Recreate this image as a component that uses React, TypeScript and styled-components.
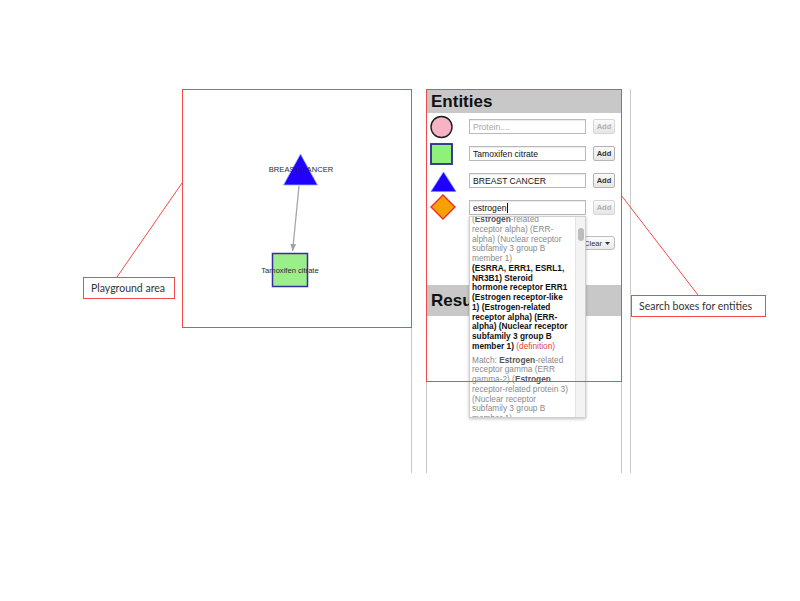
import React from "react";
import styled, { createGlobalStyle } from "styled-components";

const Global = createGlobalStyle`
  html, body { margin: 0; padding: 0; background: #fff; }
  body { font-family: "Liberation Sans", Arial, sans-serif; }
`;

const RED = "#f04a4a";
const LINE = "#c9c9c9";

const Stage = styled.div`
  position: relative;
  width: 800px;
  height: 601px;
  background: #fff;
  overflow: hidden;
`;

const Frame = styled.div`
  display: flex;
  height: 384px;
  padding: 89px 0 0 182px;
`;

const Canvas = styled.div`
  width: 229px;
  border-right: 1px solid ${LINE};
`;

const Sidebar = styled.div`
  margin-left: 14px;
  width: 194px;
  border-left: 1px solid ${LINE};
  border-right: 1px solid ${LINE};
  padding-top: 1px;
  display: flex;
  flex-direction: column;
`;

const EdgeLine = styled.div`
  margin-left: 8px;
  width: 0;
  border-left: 1px solid ${LINE};
`;

const SectionHeader = styled.div<{ $height: number; $gap?: number }>`
  height: ${(p) => p.$height}px;
  margin-top: ${(p) => p.$gap ?? 0}px;
  background: #c8c8c8;
  display: flex;
  align-items: center;
  padding-left: 4px;
  font-family: "Liberation Sans", Arial, sans-serif;
  font-weight: bold;
  font-size: 17px;
  color: #111;
`;

const EntityList = styled.div`
  display: flex;
  flex-direction: column;
`;

const Row = styled.div`
  height: 27px;
  display: flex;
  align-items: center;
  padding-left: 3px;
`;

const IconCell = styled.div`
  width: 28px;
  height: 27px;
  display: flex;
  align-items: center;
`;

const FieldWrap = styled.div`
  position: relative;
  margin-left: 11px;
  width: 117px;
  height: 15px;
`;

const Field = styled.div<{ $placeholder?: boolean }>`
  box-sizing: border-box;
  width: 100%;
  height: 100%;
  border: 1px solid #b9b9b9;
  box-shadow: inset 0 1px 1px rgba(0, 0, 0, 0.08);
  background: #fff;
  padding-left: 3px;
  display: flex;
  align-items: center;
  font-size: 8.6px;
  color: ${(p) => (p.$placeholder ? "#a8a8a8" : "#111")};
  white-space: nowrap;
`;

const Caret = styled.span`
  display: inline-block;
  width: 1px;
  height: 10px;
  background: #111;
  margin-left: 1px;
`;

const AddButton = styled.div<{ $disabled?: boolean }>`
  box-sizing: border-box;
  margin-left: 7px;
  width: 22px;
  height: 15px;
  border: 1px solid ${(p) => (p.$disabled ? "#d6d6d6" : "#b4b4b4")};
  border-radius: 2px;
  background: linear-gradient(#fafafa, #e6e6e6);
  display: flex;
  align-items: center;
  justify-content: center;
  font-size: 7.5px;
  font-weight: bold;
  color: ${(p) => (p.$disabled ? "#b0b0b0" : "#333")};
`;

const ClearRow = styled.div`
  margin-top: 15px;
  height: 14px;
  display: flex;
  justify-content: flex-end;
  padding-right: 6px;
`;

const ClearButton = styled.div`
  box-sizing: border-box;
  width: 46px;
  height: 14px;
  border: 1px solid #bdbdbd;
  border-radius: 3px;
  background: linear-gradient(#fcfcfc, #e8e8e8);
  display: flex;
  align-items: center;
  justify-content: flex-end;
  padding-right: 4px;
  gap: 3px;
  font-size: 7.5px;
  color: #333;
`;

const Menu = styled.div`
  position: absolute;
  top: 100%;
  left: 0;
  width: 117px;
  height: 202px;
  box-sizing: border-box;
  margin-top: 1px;
  background: #fff;
  border: 1px solid #cfcfcf;
  box-shadow: 0 1px 3px rgba(0, 0, 0, 0.25);
  overflow: hidden;
  z-index: 5;
  display: flex;
`;

const MenuBody = styled.div`
  flex: 1;
  padding: 0 0 0 2px;
  margin-top: -2px;
  overflow: hidden;
`;

const MenuItem = styled.div<{ $strong?: boolean; $gap?: number }>`
  margin-top: ${(p) => p.$gap ?? 0}px;
  font-size: 8.3px;
  line-height: 9.75px;
  color: ${(p) => (p.$strong ? "#111" : "#8a8a8a")};
  font-weight: ${(p) => (p.$strong ? "bold" : "normal")};
`;

const MenuLine = styled.div`
  white-space: nowrap;
`;

const Em = styled.span`
  font-weight: bold;
  color: #555;
`;

const Definition = styled.span`
  font-weight: normal;
  color: #d8483f;
`;

const ScrollTrack = styled.div`
  width: 9px;
  background: #f3f3f3;
  border-left: 1px solid #e4e4e4;
  padding-top: 11px;
  display: flex;
  justify-content: center;
`;

const ScrollThumb = styled.div`
  width: 6px;
  height: 13px;
  border-radius: 3px;
  background: #bdbdbd;
`;

const Highlight = styled.div`
  position: absolute;
  box-sizing: border-box;
  border: 1px solid ${RED};
  pointer-events: none;
  z-index: 10;
`;

const Callout = styled.div`
  position: absolute;
  box-sizing: border-box;
  border: 1px solid ${RED};
  background: #fff;
  display: flex;
  align-items: center;
  padding-left: 7px;
  font-family: Lato, "Open Sans", sans-serif;
  font-size: 10.5px;
  color: #333;
  z-index: 10;
`;

const Overlay = styled.svg`
  position: absolute;
  left: 0;
  top: 0;
  pointer-events: none;
  z-index: 9;
`;

type Seg = string | { b: string } | { def: string };

const renderLine = (segs: Seg[]) =>
  segs.map((s, i) => {
    if (typeof s === "string") return <React.Fragment key={i}>{s}</React.Fragment>;
    if ("b" in s) return <Em key={i}>{s.b}</Em>;
    return <Definition key={i}>{s.def}</Definition>;
  });

const items: { strong?: boolean; gap?: number; lines: Seg[][] }[] = [
  {
    lines: [
      ["(", { b: "Estrogen" }, "-related"],
      ["receptor alpha) (ERR-"],
      ["alpha) (Nuclear receptor"],
      ["subfamily 3 group B"],
      ["member 1)"],
    ],
  },
  {
    strong: true,
    lines: [
      ["(ESRRA, ERR1, ESRL1,"],
      ["NR3B1) Steroid"],
      ["hormone receptor ERR1"],
      ["(Estrogen receptor-like"],
      ["1) (Estrogen-related"],
      ["receptor alpha) (ERR-"],
      ["alpha) (Nuclear receptor"],
      ["subfamily 3 group B"],
      ["member 1) ", { def: "(definition)" }],
    ],
  },
  {
    gap: 4,
    lines: [
      ["Match: ", { b: "Estrogen" }, "-related"],
      ["receptor gamma (ERR"],
      ["gamma-2) (", { b: "Estrogen" }],
      ["receptor-related protein 3)"],
      ["(Nuclear receptor"],
      ["subfamily 3 group B"],
      ["member 1)"],
    ],
  },
];

const CircleIcon = () => (
  <svg width="28" height="27" viewBox="0 0 28 27">
    <circle cx="11.5" cy="14" r="10.5" fill="#f6b3c4" stroke="#1e1e1e" strokeWidth="1.4" />
  </svg>
);
const SquareIcon = () => (
  <svg width="28" height="27" viewBox="0 0 28 27">
    <rect x="1" y="4" width="21" height="20" fill="#8ff07a" stroke="#2b2b8f" strokeWidth="1.8" />
  </svg>
);
const TriangleIcon = () => (
  <svg width="28" height="27" viewBox="0 0 28 27">
    <polygon points="13.5,5 26,24.5 1,24.5" fill="#1f00ff" stroke="#6f8cff" strokeWidth="0.8" />
  </svg>
);
const DiamondIcon = () => (
  <svg width="28" height="27" viewBox="0 0 28 27">
    <polygon points="13,1 25,13 13,25 1,13" fill="#f5a100" stroke="#ee2a2a" strokeWidth="1.4" />
  </svg>
);

const Graph = () => (
  <svg width="229" height="238" viewBox="0 0 229 238">
    <defs>
      <marker id="arrow" markerWidth="8" markerHeight="8" refX="7" refY="4" orient="auto" markerUnits="userSpaceOnUse">
        <path d="M0,1 L7,4 L0,7 z" fill="#a0a0a0" />
      </marker>
    </defs>
    <line x1="117" y1="97" x2="110.6" y2="162" stroke="#a6a6a6" strokeWidth="1.3" markerEnd="url(#arrow)" />
    <polygon points="118.5,65 135.5,96 101.5,96" fill="#2200ff" stroke="#8fb4ff" strokeWidth="0.8" />
    <text x="119" y="82.5" textAnchor="middle" fontFamily="Liberation Sans, Arial, sans-serif" fontSize="7.6" fill="#2b2b2b">
      BREAST CANCER
    </text>
    <rect x="90.5" y="164.5" width="35" height="33" fill="#9bef8b" stroke="#3b2b9c" strokeWidth="1.5" />
    <text x="108" y="184" textAnchor="middle" fontFamily="Liberation Sans, Arial, sans-serif" fontSize="7.6" fill="#2b2b2b">
      Tamoxifen citrate
    </text>
  </svg>
);

export default function App() {
  return (
    <Stage>
      <Global />
      <Frame>
        <Canvas>
          <Graph />
        </Canvas>
        <Sidebar>
          <SectionHeader $height={23}>Entities</SectionHeader>
          <EntityList>
            <Row>
              <IconCell><CircleIcon /></IconCell>
              <FieldWrap><Field $placeholder>Protein....</Field></FieldWrap>
              <AddButton $disabled>Add</AddButton>
            </Row>
            <Row>
              <IconCell><SquareIcon /></IconCell>
              <FieldWrap><Field>Tamoxifen citrate</Field></FieldWrap>
              <AddButton>Add</AddButton>
            </Row>
            <Row>
              <IconCell><TriangleIcon /></IconCell>
              <FieldWrap><Field>BREAST CANCER</Field></FieldWrap>
              <AddButton>Add</AddButton>
            </Row>
            <Row>
              <IconCell><DiamondIcon /></IconCell>
              <FieldWrap>
                <Field>
                  estrogen<Caret />
                </Field>
                <Menu>
                  <MenuBody>
                    {items.map((it, i) => (
                      <MenuItem key={i} $strong={it.strong} $gap={it.gap}>
                        {it.lines.map((l, j) => (
                          <MenuLine key={j}>{renderLine(l)}</MenuLine>
                        ))}
                      </MenuItem>
                    ))}
                  </MenuBody>
                  <ScrollTrack>
                    <ScrollThumb />
                  </ScrollTrack>
                </Menu>
              </FieldWrap>
              <AddButton $disabled>Add</AddButton>
            </Row>
          </EntityList>
          <ClearRow>
            <ClearButton>
              Clear
              <svg width="5" height="3" viewBox="0 0 5 3">
                <path d="M0,0 L5,0 L2.5,3 z" fill="#333" />
              </svg>
            </ClearButton>
          </ClearRow>
          <SectionHeader $height={31} $gap={35}>Results</SectionHeader>
        </Sidebar>
        <EdgeLine />
      </Frame>

      <Highlight style={{ left: 182, top: 89, width: 230, height: 239 }} />
      <Highlight style={{ left: 426, top: 89, width: 196, height: 293 }} />
      <Overlay width="800" height="601" viewBox="0 0 800 601">
        <line x1="117" y1="277" x2="182" y2="183" stroke={RED} strokeWidth="1" />
        <line x1="621" y1="195" x2="698" y2="295" stroke={RED} strokeWidth="1" />
      </Overlay>
      <Callout style={{ left: 83, top: 277, width: 92, height: 22 }}>Playground area</Callout>
      <Callout style={{ left: 631, top: 295, width: 135, height: 22 }}>Search boxes for entities</Callout>
    </Stage>
  );
}
